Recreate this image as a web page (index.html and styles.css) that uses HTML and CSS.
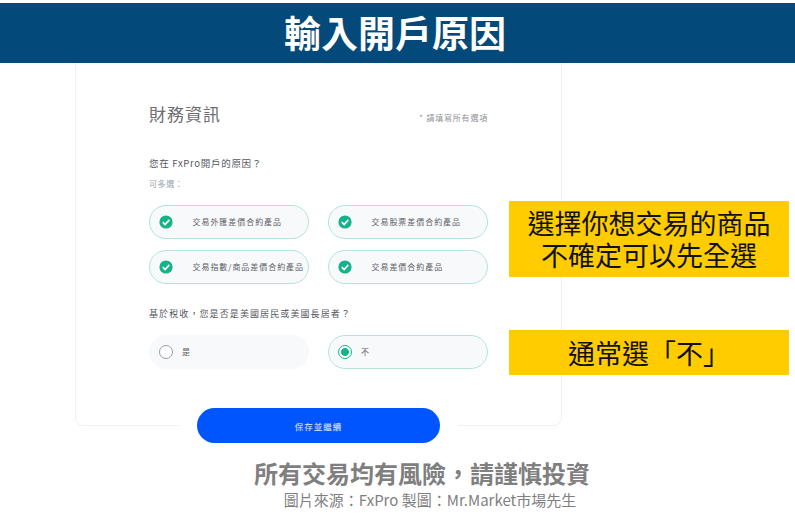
FILE: index.html
```html
<!DOCTYPE html>
<html lang="zh-Hant">
<head>
<meta charset="utf-8">
<title>輸入開戶原因</title>
<link rel="stylesheet" href="styles.css">
</head>
<body>
<header class="banner"><h1>輸入開戶原因</h1></header>
<main class="stage">
  <section class="card">
    <div class="card-head">
      <h2>財務資訊</h2>
      <span class="required">* 請填寫所有選項</span>
    </div>
    <p class="question">您在 FxPro開戶的原因&#xFF1F;</p>
    <p class="hint">可多選&#xFF1A;</p>
    <div class="options">
      <div class="option selected">
        <svg class="check" viewBox="0 0 14 14"><circle cx="7" cy="7" r="6.6"/><path d="M3.8 7.2l2.3 2.3 4.2-4.6"/></svg>
        <span class="label">交易外匯差價合約產品</span>
      </div>
      <div class="option selected">
        <svg class="check" viewBox="0 0 14 14"><circle cx="7" cy="7" r="6.6"/><path d="M3.8 7.2l2.3 2.3 4.2-4.6"/></svg>
        <span class="label">交易股票差價合約產品</span>
      </div>
      <div class="option selected">
        <svg class="check" viewBox="0 0 14 14"><circle cx="7" cy="7" r="6.6"/><path d="M3.8 7.2l2.3 2.3 4.2-4.6"/></svg>
        <span class="label">交易指數/商品差價合約產品</span>
      </div>
      <div class="option selected">
        <svg class="check" viewBox="0 0 14 14"><circle cx="7" cy="7" r="6.6"/><path d="M3.8 7.2l2.3 2.3 4.2-4.6"/></svg>
        <span class="label">交易差價合約產品</span>
      </div>
    </div>
    <p class="question tax">基於稅收&#xFF0C;您是否是美國居民或美國長居者&#xFF1F;</p>
    <div class="options radios">
      <div class="option radio"><i class="dot"></i><span class="label">是</span></div>
      <div class="option radio selected"><i class="dot on"></i><span class="label">不</span></div>
    </div>
    <div class="submit-wrap"><button class="submit" type="button">保存並繼續</button></div>
  </section>
  <aside class="note note-a">選擇你想交易的商品<br>不確定可以先全選</aside>
  <aside class="note note-b">通常選「不」</aside>
</main>
<footer class="foot">
  <p class="risk">所有交易均有風險&#xFF0C;請謹慎投資</p>
  <p class="source">圖片來源&#xFF1A;FxPro 製圖&#xFF1A;Mr.Market市場先生</p>
</footer>
</body>
</html>
```
FILE: styles.css
```css
* { box-sizing: border-box; }
html, body { margin: 0; padding: 0; }
body {
  width: 795px;
  height: 519px;
  overflow: hidden;
  background: #fff;
  padding-top: 3px;
  font-family: "Noto Sans CJK TC", "Noto Sans", sans-serif;
}
p, h1, h2 { margin: 0; font-weight: 400; }

.banner {
  height: 60px;
  background: #03497a;
  display: flex;
  justify-content: center;
  align-items: center;
  padding-right: 5px;
}
.banner h1 {
  color: #fff;
  font-size: 37px;
  font-weight: 700;
  line-height: 40px;
  position: relative;
  top: -1px;
}

.stage { position: relative; height: 363px; }

.card {
  margin-left: 75px;
  width: 487px;
  height: 363px;
  padding: 38px 73px 0 73px;
  border: 1px solid #f1f1f4;
  border-top: 0;
  border-radius: 0 0 8px 8px;
  display: flex;
  flex-direction: column;
}
.card-head { display: flex; justify-content: space-between; align-items: center; height: 26px; }
.card-head h2 { font-size: 17px; line-height: 26px; color: #6d6d72; letter-spacing: 1px; }
.required { font-size: 8px; color: #8f9298; position: relative; top: 3px; letter-spacing: .8px; }

.question { font-size: 9.5px; line-height: 14px; color: #55585e; letter-spacing: .7px; margin-top: 29px; }
.hint { font-size: 8px; line-height: 12px; color: #a0a3a8; margin-top: 8px; letter-spacing: .6px; }

.options {
  display: grid;
  grid-template-columns: 160px 160px;
  grid-auto-rows: 34px;
  column-gap: 19px;
  row-gap: 11px;
  margin-top: 15px;
}
.option {
  display: flex;
  align-items: center;
  padding-left: 9px;
  border-radius: 17px;
  background: #f8f9fb;
  border: 1px solid transparent;
  font-size: 8px;
  color: #5b5e64;
  letter-spacing: .95px;
  white-space: nowrap;
}
.label { margin-bottom: 2px; }
.option.selected { border-color: #b4e4da; }
.check { width: 14px; height: 14px; flex: none; margin-right: 19.5px; }
.check circle { fill: #14b38a; }
.check path { fill: none; stroke: #fff; stroke-width: 1.7; }

.question.tax { margin-top: 23px; letter-spacing: 1.1px; font-size: 9px; }
.radios { margin-top: 14px; }
.radio { padding-left: 9px; }
.dot {
  width: 14px;
  height: 14px;
  flex: none;
  margin-right: 9px;
  border-radius: 50%;
  border: 1px solid #9a9ca1;
  background: #fff;
}
.dot.on {
  border-color: #14b38a;
  background: radial-gradient(circle, #14b38a 0 3.6px, #fff 4.2px);
}

.submit-wrap {
  margin-top: 39px;
  align-self: center;
  background: #fff;
  padding: 0 18px;
  position: relative;
}
.submit {
  display: block;
  width: 243px;
  height: 35px;
  border: 0;
  border-radius: 18px;
  background: #0055ff;
  color: #e8efff;
  font-family: inherit;
  font-size: 8.5px;
  letter-spacing: 1px;
}

.note {
  position: absolute;
  left: 509px;
  width: 280px;
  background: #ffcc00;
  color: #111;
  font-size: 27px;
  text-align: center;
  display: flex;
  align-items: center;
  justify-content: center;
}
.note-a { top: 138px; height: 76px; line-height: 32px; }
.note-b { top: 267px; height: 45px; line-height: 32px; }

.foot { text-align: center; padding-left: 49px; margin-top: 32px; }
.risk { font-size: 24px; font-weight: 700; line-height: 30px; color: #7f7f7f; }
.source { font-size: 15px; line-height: 20px; color: #7f7f7f; margin-top: 2px; margin-left: 16px; }
```
